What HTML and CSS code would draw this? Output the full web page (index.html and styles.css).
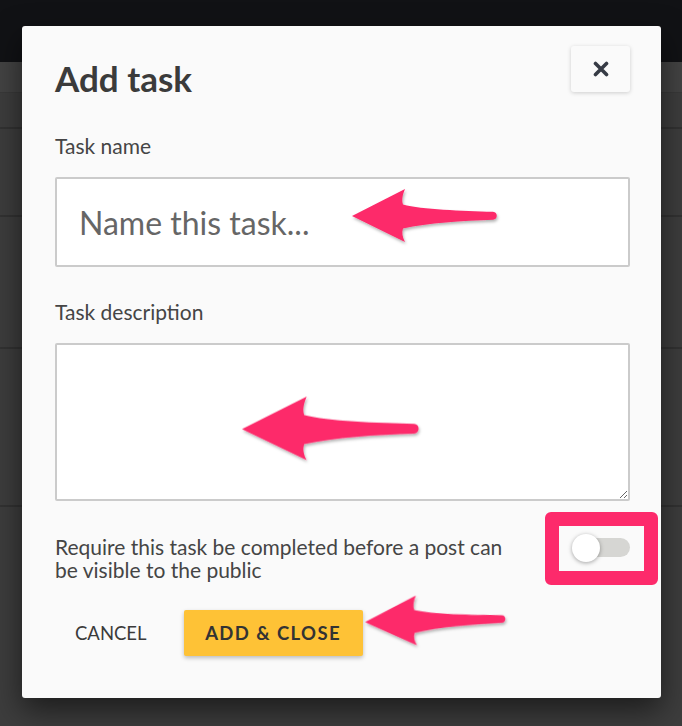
FILE: index.html
```html
<!DOCTYPE html>
<html>
<head>
<meta charset="utf-8">
<link rel="stylesheet" href="styles.css">
</head>
<body>
<div class="page">
  <div class="topbar"></div>
  <div class="band"></div>
  <div class="row r1"></div>
  <div class="row r2"></div>
  <div class="row r3"></div>
  <div class="row r4"></div>
</div>

<div class="dialog">
  <div class="head">
    <h1 class="title">Add task</h1>
    <button class="close" aria-label="Close">
      <svg width="16" height="16" viewBox="0 0 16 16"><path d="M2.5 2.5 L13.5 13.5 M13.5 2.5 L2.5 13.5" stroke="#363b45" stroke-width="3.6" stroke-linecap="round"/></svg>
    </button>
  </div>

  <label class="label first">Task name</label>
  <input class="field" type="text" placeholder="Name this task...">

  <label class="label second">Task description</label>
  <textarea class="area"></textarea>

  <div class="require">
    <p class="require-text">Require this task be completed before a post can be visible to the public</p>
    <div class="toggle"><span class="track"></span><span class="knob"></span></div>
  </div>

  <div class="actions">
    <button class="cancel">CANCEL</button>
    <button class="primary">ADD &amp; CLOSE</button>
  </div>

  <div class="highlight"></div>
</div>

<svg class="arrows" width="682" height="726" viewBox="0 0 682 726">
  <defs>
    <filter id="sh" x="-20%" y="-40%" width="140%" height="180%">
      <feDropShadow dx="1" dy="2" stdDeviation="1.5" flood-color="#000" flood-opacity="0.3"/>
    </filter>
    <path id="arw" d="M0,0 L53,-27 C50.5,-21 49.5,-16 51,-11.5 C70,-6.5 110,-5 141,-4.2 C146,-4 146,3.6 141,3.8 C110,4.8 76,7 51,12.5 C49.5,17 50.5,21 53,26 Z"/>
  </defs>
  <g fill="#fd2a6b" filter="url(#sh)">
    <use href="#arw" transform="translate(352,216)"/>
    <use href="#arw" transform="translate(242,429) scale(1.22,1.2)"/>
    <use href="#arw" transform="translate(365,622) rotate(-1.2) scale(0.97,0.94)"/>
  </g>
</svg>
</body>
</html>
```

FILE: styles.css
```css
* { box-sizing: border-box; }
html, body { margin: 0; padding: 0; }
body {
  width: 682px;
  height: 726px;
  overflow: hidden;
  background: #3d3d3d;
  font-family: Lato, "Noto Sans", sans-serif;
  position: relative;
}
.page { display: flex; flex-direction: column; }
.topbar { height: 62px; background: #111215; }
.band { height: 31px; background: #434343; border-bottom: 1px solid #393939; }
.row { border-bottom: 2px solid #323232; }
.r1 { height: 36px; }
.r2 { height: 88px; }
.r3 { height: 132px; }
.r4 { height: 158px; }

.dialog {
  position: absolute;
  left: 22px;
  top: 26px;
  width: 639px;
  height: 672px;
  background: #fafafa;
  border-radius: 3px;
  box-shadow: 0 12px 30px rgba(0,0,0,0.55);
  padding: 20px 31px 0 33px;
  display: flex;
  flex-direction: column;
}
.head {
  display: flex;
  justify-content: space-between;
  align-items: flex-start;
  height: 46px;
}
.title {
  margin: 12px 0 0 0;
  font-size: 35px;
  line-height: 40px;
  font-weight: 700;
  color: #3b3b3b;
}
.close {
  width: 59px;
  height: 46px;
  border: none;
  background: #fafafa;
  border-radius: 3px;
  box-shadow: 0 1px 4px rgba(0,0,0,0.18);
  display: flex;
  align-items: center;
  justify-content: center;
  padding: 0;
}
.close svg { display: block; }

.label {
  display: block;
  font-size: 21px;
  line-height: 25px;
  color: #454545;
}
.label.first { margin-top: 41px; }
.label.second { margin-top: 32px; }

.field, .area {
  display: block;
  width: 575px;
  margin-top: 19px;
  border: 2px solid #cbcbcb;
  border-radius: 2px;
  background: #fff;
  font-family: Lato, "Noto Sans", sans-serif;
  outline: none;
}
.field {
  height: 90px;
  padding: 0 22px;
  font-size: 32px;
  color: #555;
}
.field::placeholder { color: #666; opacity: 1; }
.area {
  height: 158px;
  resize: both;
  font-size: 18px;
  padding: 10px;
}

.require {
  margin-top: 34px;
  display: flex;
  align-items: flex-start;
  justify-content: space-between;
  width: 575px;
}
.require-text {
  margin: 0;
  width: 468px;
  font-size: 21px;
  line-height: 23px;
  color: #454545;
}
.toggle {
  position: relative;
  width: 58px;
  height: 30px;
}
.track {
  position: absolute;
  left: 6px;
  top: 3px;
  width: 52px;
  height: 19px;
  border-radius: 10px;
  background: #d6d6d3;
}
.knob {
  position: absolute;
  left: 0;
  top: -1px;
  width: 28px;
  height: 28px;
  border-radius: 50%;
  background: #fff;
  box-shadow: 0 1px 4px rgba(0,0,0,0.35);
}

.actions {
  margin-top: 29px;
  display: flex;
  align-items: center;
  gap: 17px;
}
.cancel {
  border: none;
  background: transparent;
  font-family: Lato, "Noto Sans", sans-serif;
  font-size: 18.5px;
  color: #3a3a3a;
  padding: 0 20px;
  height: 46px;
}
.primary {
  border: none;
  width: 179px;
  height: 46px;
  background: #fec236;
  border-radius: 2px;
  box-shadow: 0 2px 4px rgba(0,0,0,0.25);
  font-family: Lato, "Noto Sans", sans-serif;
  font-weight: 700;
  font-size: 18.5px;
  letter-spacing: 1.4px;
  color: #333;
}

.highlight {
  position: absolute;
  left: 523px;
  top: 486px;
  width: 113px;
  height: 73px;
  border: 14px solid #fd2a6b;
  border-radius: 6px;
}

.arrows {
  position: absolute;
  left: 0;
  top: 0;
  pointer-events: none;
}
```
